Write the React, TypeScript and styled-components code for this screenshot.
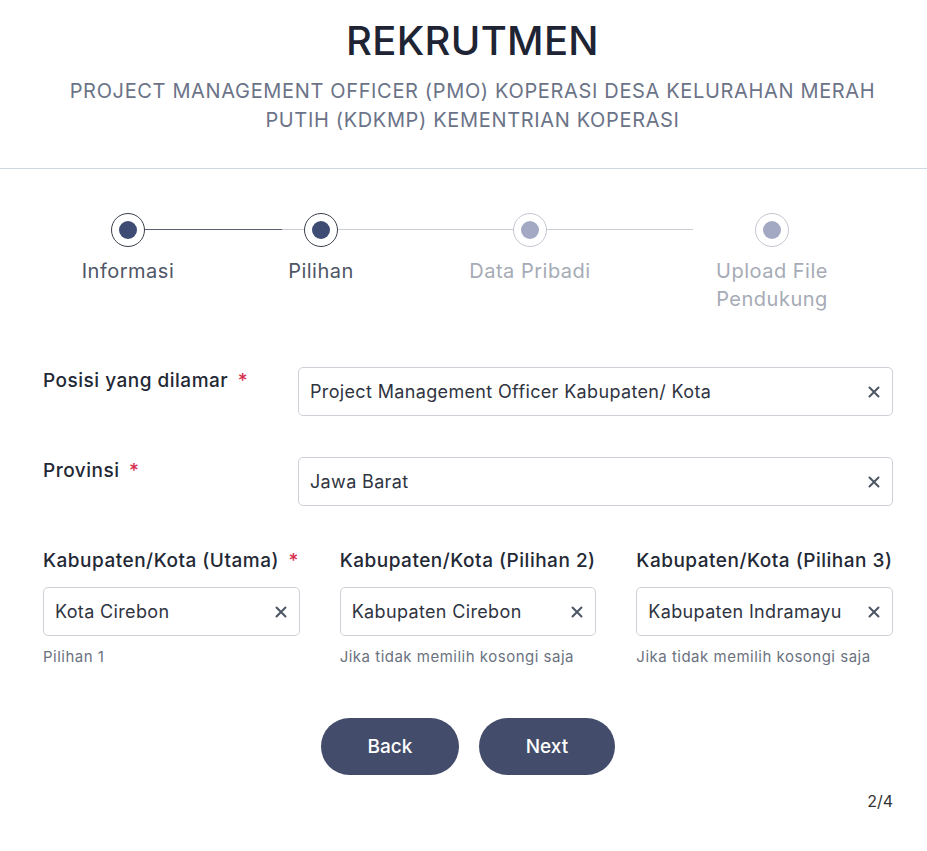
import React from 'react';
import styled, { createGlobalStyle } from 'styled-components';

const GlobalStyle = createGlobalStyle`
  html, body {
    margin: 0;
    padding: 0;
    background: #ffffff;
    font-family: Inter, "Noto Sans", Arial, sans-serif;
  }
  * { box-sizing: border-box; }
`;

type StepItem = { label: string; active: boolean };

const steps: StepItem[] = [
  { label: 'Informasi', active: true },
  { label: 'Pilihan', active: true },
  { label: 'Data Pribadi', active: false },
  { label: 'Upload File Pendukung', active: false },
];

const ClearIcon: React.FC = () => (
  <svg width="12" height="12" viewBox="0 0 12 12">
    <path d="M1.5 1.5 L10.5 10.5 M10.5 1.5 L1.5 10.5" stroke="#4b5563" strokeWidth="2" strokeLinecap="round" />
  </svg>
);

const Select: React.FC<{ value: string }> = ({ value }) => (
  <SelectBox>
    <SelectValue>{value}</SelectValue>
    <ClearButton>
      <ClearIcon />
    </ClearButton>
  </SelectBox>
);

const App: React.FC = () => {
  return (
    <>
      <GlobalStyle />
      <Page>
        <Header>
          <Title>REKRUTMEN</Title>
          <Subtitle>
            PROJECT MANAGEMENT OFFICER (PMO) KOPERASI DESA KELURAHAN MERAH PUTIH (KDKMP) KEMENTRIAN KOPERASI
          </Subtitle>
        </Header>

        <Content>
          <Stepper>
            <Step>
              <Circle $active={steps[0].active}><Dot $active={steps[0].active} /></Circle>
              <StepLabel $active={steps[0].active}>{steps[0].label}</StepLabel>
            </Step>
            <Connector $width={159} $split={137} />
            <Step>
              <Circle $active={steps[1].active}><Dot $active={steps[1].active} /></Circle>
              <StepLabel $active={steps[1].active}>{steps[1].label}</StepLabel>
            </Step>
            <Connector $width={175} />
            <Step>
              <Circle $active={steps[2].active}><Dot $active={steps[2].active} /></Circle>
              <StepLabel $active={steps[2].active}>{steps[2].label}</StepLabel>
            </Step>
            <Connector $width={146} $trail={62} />
            <Step>
              <Circle $active={steps[3].active}><Dot $active={steps[3].active} /></Circle>
              <StepLabel $active={steps[3].active}>{steps[3].label}</StepLabel>
            </Step>
          </Stepper>

          <FormRow>
            <Label>
              Posisi yang dilamar <Required>*</Required>
            </Label>
            <Select value="Project Management Officer Kabupaten/ Kota" />
          </FormRow>

          <FormRow>
            <Label>
              Provinsi <Required>*</Required>
            </Label>
            <Select value="Jawa Barat" />
          </FormRow>

          <ThreeCols>
            <Field>
              <Label>
                Kabupaten/Kota (Utama) <Required>*</Required>
              </Label>
              <Select value="Kota Cirebon" />
              <Helper>Pilihan 1</Helper>
            </Field>
            <Field>
              <Label>Kabupaten/Kota (Pilihan 2)</Label>
              <Select value="Kabupaten Cirebon" />
              <Helper>Jika tidak memilih kosongi saja</Helper>
            </Field>
            <Field>
              <Label>Kabupaten/Kota (Pilihan 3)</Label>
              <Select value="Kabupaten Indramayu" />
              <Helper>Jika tidak memilih kosongi saja</Helper>
            </Field>
          </ThreeCols>

          <Actions>
            <PillButton $width={138}>Back</PillButton>
            <PillButton $width={136}>Next</PillButton>
          </Actions>

          <PageCount>2/4</PageCount>
        </Content>
      </Page>
    </>
  );
};

// Styled components
const Page = styled.div`
  width: 100%;
  min-height: 851px;
  background: #ffffff;
`;

const Header = styled.header`
  display: flex;
  flex-direction: column;
  align-items: center;
  padding: 17px 34px 33px 52px;
  border-bottom: 1px solid #cfd8e0;
`;

const Title = styled.h1`
  margin: 0;
  font-size: 40px;
  font-weight: 500;
  line-height: 48px;
  color: #1e2433;
  letter-spacing: 0.3px;
`;

const Subtitle = styled.p`
  margin: 12px 0 0 0;
  max-width: 830px;
  text-align: center;
  font-size: 20px;
  font-weight: 400;
  line-height: 29px;
  color: #6b7388;
  letter-spacing: 0.65px;
`;

const Content = styled.main`
  padding: 44px 34px 0 43px;
  display: flex;
  flex-direction: column;
`;

const Stepper = styled.div`
  display: flex;
  align-items: flex-start;
  padding-left: 68px;
  height: 155px;
`;

const Step = styled.div`
  width: 34px;
  display: flex;
  flex-direction: column;
  align-items: center;
`;

const Circle = styled.div<{ $active: boolean }>`
  width: 34px;
  height: 34px;
  border-radius: 50%;
  border: 1px solid ${(p) => (p.$active ? '#3a3f4b' : '#c4c7cf')};
  display: flex;
  align-items: center;
  justify-content: center;
  background: #ffffff;
`;

const Dot = styled.div<{ $active: boolean }>`
  width: 18px;
  height: 18px;
  border-radius: 50%;
  background: ${(p) => (p.$active ? '#3e4c74' : '#a3a9c2')};
`;

const StepLabel = styled.div<{ $active: boolean }>`
  margin-top: 10px;
  width: 136px;
  flex-shrink: 0;
  text-align: center;
  font-size: 20px;
  line-height: 28px;
  letter-spacing: 0.5px;
  color: ${(p) => (p.$active ? '#4f5666' : '#a6abb6')};
`;

const Connector = styled.div<{ $width: number; $split?: number; $trail?: number }>`
  width: ${(p) => p.$width}px;
  height: 1px;
  margin-top: 16px;
  margin-right: ${(p) => p.$trail ?? 0}px;
  flex-shrink: 0;
  background: ${(p) =>
    p.$split
      ? `linear-gradient(to right, #5a6070 0, #5a6070 ${p.$split}px, #c9ced6 ${p.$split}px, #c9ced6 100%)`
      : '#c9ced6'};
`;

const FormRow = styled.div`
  display: grid;
  grid-template-columns: 255px 1fr;
  align-items: start;
  margin-bottom: 42px;
`;

const Label = styled.div`
  font-size: 19px;
  font-weight: 480;
  line-height: 26px;
  letter-spacing: 0.5px;
  color: #232835;
  white-space: nowrap;
`;

const Required = styled.span`
  color: #d6304f;
  margin-left: 4px;
`;

const SelectBox = styled.div`
  height: 49px;
  border: 1px solid #cdd1d7;
  border-radius: 5px;
  display: flex;
  align-items: center;
  padding: 0 11px 0 11px;
  background: #ffffff;
  margin-top: -1px;
`;

const SelectValue = styled.span`
  flex: 1;
  font-size: 18px;
  letter-spacing: 0.35px;
  color: #2f3441;
  white-space: nowrap;
  overflow: hidden;
`;

const ClearButton = styled.span`
  display: flex;
  align-items: center;
  justify-content: center;
  width: 14px;
  height: 14px;
`;

const ThreeCols = styled.div`
  display: grid;
  grid-template-columns: repeat(3, 1fr);
  column-gap: 40px;
`;

const Field = styled.div`
  display: flex;
  flex-direction: column;
  gap: 14px;
`;

const Helper = styled.div`
  font-size: 15px;
  line-height: 18px;
  letter-spacing: 0.5px;
  color: #6b7280;
  margin-top: -2px;
`;

const Actions = styled.div`
  display: flex;
  justify-content: center;
  gap: 20px;
  margin-top: 52px;
`;

const PillButton = styled.button<{ $width: number }>`
  width: ${(p) => p.$width}px;
  height: 57px;
  border: none;
  border-radius: 29px;
  background: #434d6b;
  color: #ffffff;
  font-family: Inter, "Noto Sans", Arial, sans-serif;
  font-size: 19px;
  font-weight: 480;
  cursor: pointer;
`;

const PageCount = styled.div`
  align-self: flex-end;
  margin-top: 16px;
  font-size: 16px;
  color: #333333;
`;

export default App;
